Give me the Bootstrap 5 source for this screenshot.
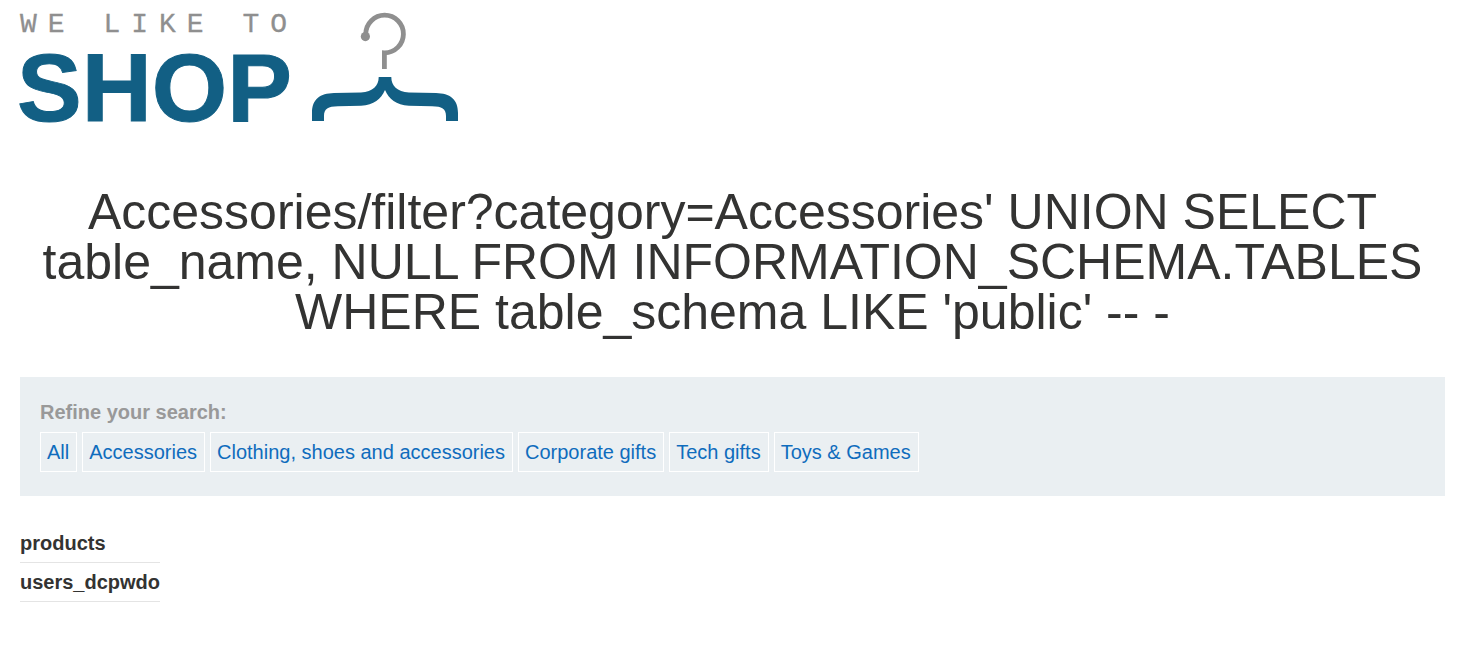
<!DOCTYPE html>
<html lang="en">
<head>
<meta charset="utf-8">
<meta name="viewport" content="width=device-width, initial-scale=1">
<title>We Like to Shop</title>
<link href="https://cdn.jsdelivr.net/npm/bootstrap@5.3.0/dist/css/bootstrap.min.css" rel="stylesheet">
<style>
  body { font-family: "Liberation Sans", Arial, sans-serif; font-size: 20px; line-height: 30px; color: #333332; }
  .page { padding: 12px 29px 40px 20px; }
  .logo-mark { width: 440px; height: 112px; overflow: visible; }
  .logo-top { font: 28px "Liberation Mono", "Courier New", monospace; letter-spacing: 11px; fill: #8f8f8f; stroke: #8f8f8f; stroke-width: .3; }
  .logo-main { font: bold 97px "Liberation Sans", Arial, sans-serif; fill: #125f84; stroke: #125f84; stroke-width: 1; }
  .page-title { font-size: 50px; line-height: 50px; font-weight: 400; margin: 63px 0 40px; }
  .filters { background: #eaeff2; padding: 20px 20px 24px; }
  .filters-label { color: #999; }
  .filter-list { gap: 5px; margin-top: 5px; }
  .filter-link { border: 1px solid #fff; color: #0f6cbd; line-height: 38px; padding: 0 7px 0 6px; }
  .filter-link:hover { color: #094f8c; }
  .results { margin: 28px 0 0; }
  .results th { border-bottom: 1px solid #e4e4e4; padding: 4px 0; }
</style>
</head>
<body>
<div class="page">
  <header>
    <svg class="logo-mark d-block" viewBox="0 0 440 112" role="img" aria-label="We like to shop">
      <text class="logo-top" x="0" y="20">WE LIKE TO</text>
      <text class="logo-main" x="-3" y="109">SHOP</text>
      <g fill="none" stroke="#8f8f8f" stroke-width="4.8">
        <path d="M345.800 24V22A18.800 18.800 0 1 1 364.400 40.800V57"/>
      </g>
      <circle cx="345.4" cy="24.6" r="4.6" fill="#8f8f8f"/>
      <path fill="#125f84" d="M292 109V101C292 87 300 81.500 314 81L341 80.500C353 79.500 358.700 74 358.700 65H371.300C371.300 74 377 79.500 389 80.500L416 81C430 81.500 438 87 438 101V109H426V104C426 97 422 94.500 412 94.300L389 93.700C376 93 369 87 365 78C361 87 354 93 341 93.700L318 94.300C308 94.500 304 97 304 104V109Z"/>
    </svg>
  </header>
  <main>
    <h1 class="page-title text-center">Accessories/filter?category=Accessories' UNION SELECT table_name, NULL FROM INFORMATION_SCHEMA.TABLES WHERE table_schema LIKE 'public' -- -</h1>
    <section class="filters">
      <div class="filters-label fw-bold">Refine your search:</div>
      <nav class="filter-list d-flex flex-wrap" aria-label="Categories">
        <a class="filter-link text-decoration-none" href="#">All</a>
        <a class="filter-link text-decoration-none" href="#">Accessories</a>
        <a class="filter-link text-decoration-none" href="#">Clothing, shoes and accessories</a>
        <a class="filter-link text-decoration-none" href="#">Corporate gifts</a>
        <a class="filter-link text-decoration-none" href="#">Tech gifts</a>
        <a class="filter-link text-decoration-none" href="#">Toys &amp; Games</a>
      </nav>
    </section>
    <table class="results">
      <tbody>
        <tr><th scope="row">products</th></tr>
        <tr><th scope="row">users_dcpwdo</th></tr>
      </tbody>
    </table>
  </main>
</div>
<script src="https://cdn.jsdelivr.net/npm/bootstrap@5.3.0/dist/js/bootstrap.bundle.min.js"></script>
</body>
</html>
